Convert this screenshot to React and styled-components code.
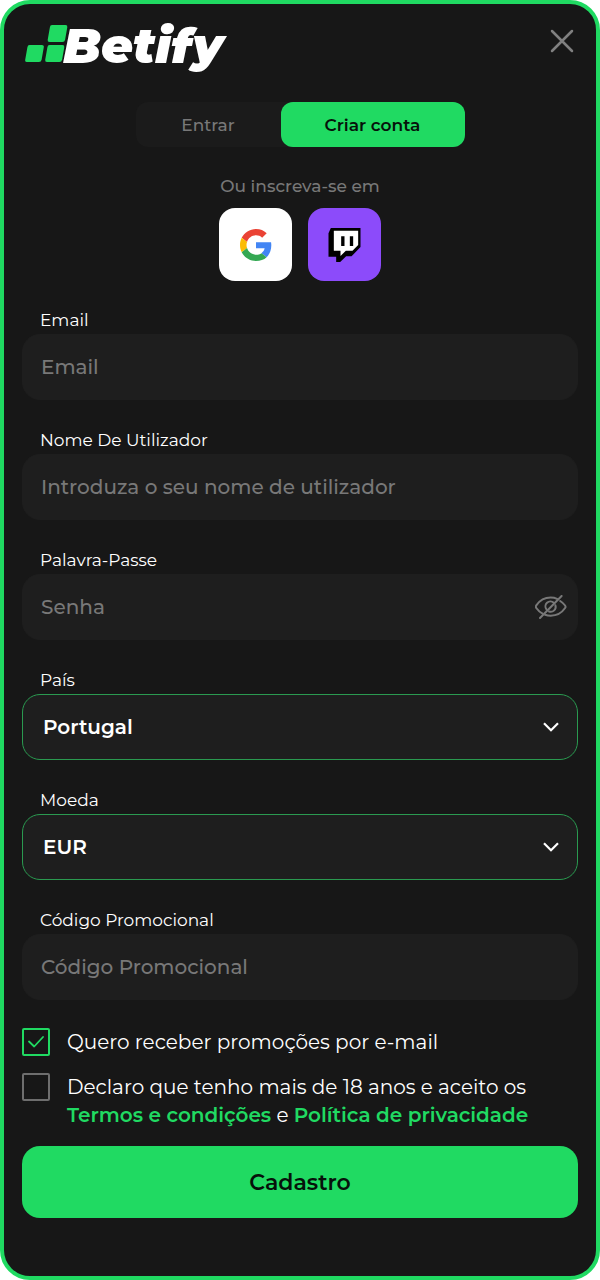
import { useState } from "react";
import styled, { createGlobalStyle } from "styled-components";

const colors = {
  green: "#20da62",
  greenDark: "#2a9a50",
  background: "#171717",
  field: "#1e1e1e",
  tabs: "#1b1b1b",
  muted: "#787878",
  twitch: "#8c4bfa",
  white: "#ffffff",
};

const GoogleIcon = () => (
  <svg width="32" height="32" viewBox="0 0 48 48" aria-hidden="true">
    <path
      fill="#EA4335"
      d="M24 9.5c3.54 0 6.71 1.22 9.21 3.6l6.85-6.85C35.9 2.38 30.47 0 24 0 14.62 0 6.51 5.38 2.56 13.22l7.98 6.19C12.43 13.72 17.74 9.5 24 9.5z"
    />
    <path
      fill="#4285F4"
      d="M46.98 24.55c0-1.57-.15-3.09-.38-4.55H24v9.02h12.94c-.58 2.96-2.26 5.48-4.78 7.18l7.73 6c4.51-4.18 7.09-10.36 7.09-17.65z"
    />
    <path
      fill="#FBBC05"
      d="M10.53 28.59c-.48-1.45-.76-2.99-.76-4.59s.27-3.14.76-4.59l-7.98-6.19C.92 16.46 0 20.12 0 24c0 3.88.92 7.54 2.56 10.78l7.97-6.19z"
    />
    <path
      fill="#34A853"
      d="M24 48c6.48 0 11.93-2.13 15.89-5.81l-7.73-6c-2.15 1.45-4.92 2.3-8.16 2.3-6.26 0-11.57-4.22-13.47-9.91l-7.98 6.19C6.51 42.62 14.62 48 24 48z"
    />
  </svg>
);

const TwitchIcon = () => (
  <svg width="33" height="34" viewBox="0 0 96 102" aria-hidden="true">
    <path fill="#000" d="M7 0H96V57L69 85H53L35 102H23V86H0V16z" />
    <path fill="#fff" d="M16 8H89V51L72 68H52L36 84V68H16z" />
    <path fill="#000" d="M38 25h10v29h-10zM64 25h10v29h-10z" />
  </svg>
);

const LogoMark = () => (
  <svg width="44" height="38" viewBox="0 0 44 38" fill={colors.green} aria-hidden="true">
    <path d="M27 0h13.500q2.200 0 1.800 2.200l-2.200 12.600q-.4 2.200-2.600 2.200H24.500q-2.200 0-1.800-2.200l2.200-12.600Q25.200 0 27 0z" />
    <path d="M4.500 20h12.500q2.200 0 1.800 2.200l-2.200 12.600q-.4 2.200-2.600 2.200H2q-2.200 0-1.800-2.200l2.200-12.600Q2.700 20 4.500 20z" />
    <path d="M24.500 20h13q2.200 0 1.800 2.200l-2.200 12.600q-.4 2.200-2.600 2.200H22q-2.200 0-1.800-2.200l2.200-12.600Q22.700 20 24.500 20z" />
  </svg>
);

const CloseIcon = () => (
  <svg width="24" height="24" viewBox="0 0 24 24" fill="none" stroke="#808080" strokeWidth="2.500" strokeLinecap="round" aria-hidden="true">
    <path d="M2 2l20 20M22 2L2 22" />
  </svg>
);

const EyeOffIcon = () => (
  <svg width="32" height="24" viewBox="0 0 32 24" fill="none" stroke={colors.muted} strokeWidth="2" strokeLinecap="round" aria-hidden="true">
    <path d="M22 3.900C20.200 3 18 2.600 15.700 2.600 9 2.600 3.800 6.800 1.300 10.400q-.9 1.300 0 2.600C2.700 15 4.800 17.200 7.600 18.700" />
    <path d="M25.200 6C27.300 7.300 29 9 30.100 10.500q.9 1.200 0 2.500C27.500 16.800 22.300 20.700 15.700 20.700c-2 0-3.900-.3-5.600-.9" />
    <path d="M18.800 7.700A5 5 0 0 0 11.600 14.600M20.400 10.200A5 5 0 0 1 14 16.500" />
    <path d="M5 23L26.600 1" />
  </svg>
);

const ChevronIcon = () => (
  <svg width="16" height="10" viewBox="0 0 16 10" fill="none" stroke="#fff" strokeWidth="2.200" aria-hidden="true">
    <path d="M1 1.200L8 8.200L15 1.200" />
  </svg>
);

const CheckIcon = () => (
  <svg width="16" height="12" viewBox="0 0 16 12" fill="none" stroke={colors.green} strokeWidth="1.800" strokeLinecap="round" strokeLinejoin="round" aria-hidden="true">
    <path d="M1 5.500L6.200 10.500L15 1" />
  </svg>
);

const TextField = ({ id, label, action, ...props }) => (
  <Field>
    <Label htmlFor={id}>{label}</Label>
    <Control>
      <Input id={id} {...props} />
      {action}
    </Control>
  </Field>
);

const SelectField = ({ id, label, options }) => (
  <Field>
    <Label htmlFor={id}>{label}</Label>
    <Control $outlined>
      <Select id={id}>
        {options.map((option) => (
          <option key={option}>{option}</option>
        ))}
      </Select>
      <ChevronIcon />
    </Control>
  </Field>
);

const CheckField = ({ id, defaultChecked = false, children }) => {
  const [checked, setChecked] = useState(defaultChecked);
  return (
    <CheckRow>
      <CheckBox>
        <CheckInput
          id={id}
          type="checkbox"
          checked={checked}
          onChange={(e) => setChecked(e.target.checked)}
        />
        {checked && <CheckIcon />}
      </CheckBox>
      <CheckLabel htmlFor={id}>{children}</CheckLabel>
    </CheckRow>
  );
};

const App = () => {
  const [showPassword, setShowPassword] = useState(false);

  return (
    <>
      <GlobalStyle />
      <Panel>
        <Header>
          <Logo href="#">
            <LogoMark />
            <LogoText>Betify</LogoText>
          </Logo>
          <IconButton type="button" aria-label="Fechar">
            <CloseIcon />
          </IconButton>
        </Header>

        <Tabs>
          <Tab type="button">Entrar</Tab>
          <Tab type="button" $active>
            Criar conta
          </Tab>
        </Tabs>

        <SocialTitle>Ou inscreva-se em</SocialTitle>
        <SocialList>
          <SocialButton type="button" aria-label="Google">
            <GoogleIcon />
          </SocialButton>
          <SocialButton type="button" aria-label="Twitch" $color={colors.twitch}>
            <TwitchIcon />
          </SocialButton>
        </SocialList>

        <Form onSubmit={(e) => e.preventDefault()}>
          <TextField id="email" label="Email" type="email" placeholder="Email" />
          <TextField
            id="username"
            label="Nome De Utilizador"
            type="text"
            placeholder="Introduza o seu nome de utilizador"
          />
          <TextField
            id="password"
            label="Palavra-Passe"
            type={showPassword ? "text" : "password"}
            placeholder="Senha"
            action={
              <IconButton
                type="button"
                aria-label="Mostrar senha"
                onClick={() => setShowPassword(!showPassword)}
              >
                <EyeOffIcon />
              </IconButton>
            }
          />
          <SelectField id="country" label="País" options={["Portugal"]} />
          <SelectField id="currency" label="Moeda" options={["EUR"]} />
          <TextField
            id="promo"
            label="Código Promocional"
            type="text"
            placeholder="Código Promocional"
          />

          <Checks>
            <CheckField id="news" defaultChecked>
              Quero receber promoções por e-mail
            </CheckField>
            <CheckField id="terms">
              Declaro que tenho mais de 18 anos e aceito os{" "}
              <TextLink href="#">Termos e condições</TextLink> e{" "}
              <TextLink href="#">Política de privacidade</TextLink>
            </CheckField>
          </Checks>

          <Submit type="submit">Cadastro</Submit>
        </Form>
      </Panel>
    </>
  );
};

export default App;

const GlobalStyle = createGlobalStyle`
  * {
    box-sizing: border-box;
  }

  body {
    margin: 0;
    background: ${colors.white};
  }

  body, button, input, select {
    font-family: Montserrat, Inter, sans-serif;
  }
`;

const Panel = styled.main`
  display: flex;
  flex-direction: column;
  align-items: center;
  min-height: 100vh;
  padding: 18px 18px 54px;
  border: 4px solid ${colors.green};
  border-radius: 30px;
  background: ${colors.background};
  color: ${colors.white};
`;

const Header = styled.header`
  display: flex;
  align-items: flex-start;
  justify-content: space-between;
  width: 100%;
  height: 56px;
  padding: 0 4px 0 3px;
`;

const Logo = styled.a`
  display: flex;
  align-items: flex-start;
  padding-top: 3px;
  color: ${colors.white};
  text-decoration: none;
`;

const LogoText = styled.span`
  margin-left: -6px;
  font-size: 49px;
  font-style: italic;
  font-weight: 900;
  line-height: 42px;
`;

const IconButton = styled.button`
  display: flex;
  flex-shrink: 0;
  padding: 0;
  border: 0;
  background: none;
  cursor: pointer;

  ${Header} & {
    margin-top: 7px;
  }
`;

const Tabs = styled.nav`
  display: flex;
  margin-top: 24px;
  border-radius: 12px;
  background: ${colors.tabs};
`;

const Tab = styled.button`
  width: ${({ $active }) => ($active ? "184px" : "145px")};
  height: 45px;
  padding: 0;
  border: 0;
  border-radius: 12px;
  background: ${({ $active }) => ($active ? colors.green : "none")};
  color: ${({ $active }) => ($active ? "#06120a" : colors.muted)};
  font-size: 17px;
  font-weight: ${({ $active }) => ($active ? 600 : 500)};
  cursor: pointer;
`;

const SocialTitle = styled.p`
  margin: 27px 0 10px;
  color: ${colors.muted};
  font-size: 17px;
  font-weight: 500;
  line-height: 24px;
`;

const SocialList = styled.div`
  display: flex;
  gap: 16px;
`;

const SocialButton = styled.button`
  display: flex;
  align-items: center;
  justify-content: center;
  width: 73px;
  height: 73px;
  padding: 0;
  border: 0;
  border-radius: 16px;
  background: ${({ $color }) => $color || colors.white};
  cursor: pointer;
`;

const Form = styled.form`
  display: flex;
  flex-direction: column;
  gap: 28px;
  width: 100%;
  margin-top: 27px;
`;

const Field = styled.div`
  display: flex;
  flex-direction: column;
`;

const Label = styled.label`
  padding: 0 18px 2px;
  font-size: 17px;
  line-height: 24px;
`;

const Control = styled.div`
  display: grid;
  align-items: center;
  height: 66px;
  border: 1px solid ${({ $outlined }) => ($outlined ? colors.greenDark : colors.field)};
  border-radius: 18px;
  background: ${colors.field};

  > * {
    grid-area: 1 / 1;
  }

  > svg {
    justify-self: end;
    margin-right: 18px;
    pointer-events: none;
  }

  > button {
    justify-self: end;
    margin-right: 10px;
  }
`;

const Input = styled.input`
  width: 100%;
  height: 100%;
  padding: 0 56px 0 18px;
  border: 0;
  outline: 0;
  background: none;
  color: ${colors.white};
  font-size: 20px;
  font-weight: 500;

  &::placeholder {
    color: ${colors.muted};
    opacity: 1;
  }
`;

const Select = styled.select`
  width: 100%;
  height: 100%;
  padding: 0 56px 0 20px;
  border: 0;
  outline: 0;
  appearance: none;
  background: none;
  color: ${colors.white};
  font-size: 20px;
  font-weight: 600;
`;

const Checks = styled.div`
  display: flex;
  flex-direction: column;
  gap: 17px;
`;

const CheckRow = styled.div`
  display: flex;
  align-items: flex-start;
  gap: 17px;
`;

const CheckBox = styled.span`
  display: grid;
  flex-shrink: 0;
  place-items: center;

  > * {
    grid-area: 1 / 1;
  }

  svg {
    pointer-events: none;
  }
`;

const CheckInput = styled.input`
  width: 28px;
  height: 28px;
  margin: 0;
  border: 2px solid #6e6e6e;
  border-radius: 2px;
  appearance: none;
  cursor: pointer;

  &:checked {
    border-color: ${colors.green};
  }
`;

const CheckLabel = styled.label`
  font-size: 20px;
  line-height: 28px;
`;

const TextLink = styled.a`
  color: ${colors.green};
  font-weight: 600;
  text-decoration: none;
`;

const Submit = styled.button`
  height: 72px;
  margin-top: -11px;
  border: 0;
  border-radius: 18px;
  background: ${colors.green};
  color: #06120a;
  font-size: 22px;
  font-weight: 600;
  cursor: pointer;
`;
